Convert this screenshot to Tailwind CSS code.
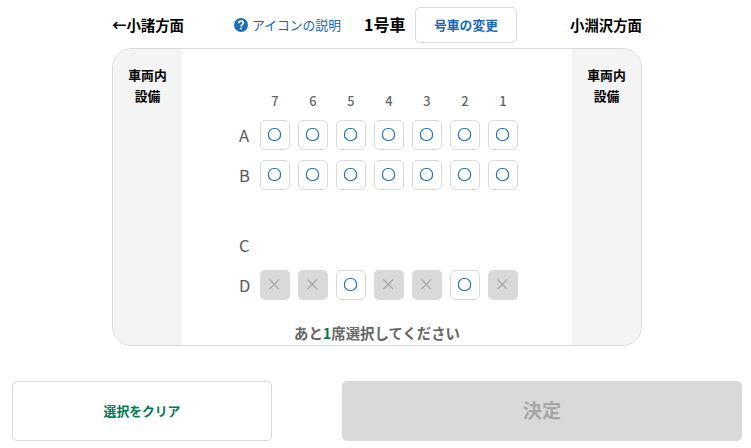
<!DOCTYPE html>
<html lang="ja">
<head>
    <meta charset="UTF-8">
    <meta name="viewport" content="width=device-width, initial-scale=1.0">
    <title>座席選択</title>
    <script src="https://cdn.jsdelivr.net/npm/@tailwindcss/browser@4"></script>
</head>
<body class="bg-white text-black font-['Noto_Sans_CJK_JP',sans-serif] overflow-hidden">
    <!-- アイコン定義 -->
    <svg class="hidden">
        <symbol id="vacant" viewBox="0 0 15 15">
            <rect x="1.5" y="1.5" width="12" height="12" rx="5.3" fill="none" stroke="#1d72b8" stroke-width="1.2" />
        </symbol>
        <symbol id="taken" viewBox="0 0 15 15">
            <path d="M2.5 2.5L12 12M12 2.5L2.5 12" fill="none" stroke="#a6a6a6" stroke-width="1.1" />
        </symbol>
    </svg>

    <!-- 号車ヘッダー -->
    <header class="flex items-center w-[530px] h-12 ml-28 pt-0.5 font-bold">
        <div class="w-[122px] text-[14.4px]">←小諸方面</div>
        <a href="#" class="flex items-center w-[130px] text-[12.8px] font-normal text-[#2065b0]">
            <svg class="w-3.5 h-3.5 mr-1" viewBox="0 0 14 14">
                <circle cx="7" cy="7" r="7" fill="#1d6fb5" />
                <path d="M4.7 5.3C4.7 3.8 5.7 3.1 7.1 3.1C8.5 3.1 9.4 3.8 9.4 5C9.4 6.5 7.1 6.5 7.1 8.4" fill="none" stroke="#fff" stroke-width="1.6" />
                <circle cx="7.1" cy="10.5" r="1" fill="#fff" />
            </svg>
            アイコンの説明
        </a>
        <div class="w-[51px] -mt-0.5 text-base">1号車</div>
        <button type="button" class="w-[102px] h-9 border border-[#d9d9d9] rounded-[5px] text-[12.8px] text-[#1d69b4]">号車の変更</button>
        <div class="ml-auto text-[14.4px]">小淵沢方面</div>
    </header>

    <!-- 車両 -->
    <main class="flex w-[530px] h-[298px] ml-28 border border-[#d9d9d9] rounded-[20px] overflow-hidden">
        <div class="w-[69px] pt-[15px] bg-[#f4f4f4] text-center text-[12.8px] leading-[21px] font-bold">車両内<br>設備</div>
        <div class="flex-1 flex flex-col text-[#595757]">
            <div class="flex gap-2 h-[71px] pt-[42px] pl-[78px] text-[12.8px] leading-5 font-medium text-center text-[#666]">
                <span class="w-[30px]">7</span>
                <span class="w-[30px]">6</span>
                <span class="w-[30px]">5</span>
                <span class="w-[30px]">4</span>
                <span class="w-[30px]">3</span>
                <span class="w-[30px]">2</span>
                <span class="w-[30px]">1</span>
            </div>
            <div id="rowA" class="flex gap-2 h-10 pl-[57px]"></div>
            <div id="rowB" class="flex gap-2 h-[70px] pl-[57px]"></div>
            <div id="rowC" class="flex gap-2 h-10 pl-[57px]"></div>
            <div id="rowD" class="flex gap-2 h-[52px] pl-[57px]"></div>
            <p class="text-center text-[14.4px] leading-[22px] font-bold text-[#666]">あと<span class="text-[#007a53]">1</span>席選択してください</p>
        </div>
        <div class="w-[69px] pt-[15px] bg-[#f4f4f4] text-center text-[12.8px] leading-[21px] font-bold">車両内<br>設備</div>
    </main>

    <!-- 操作ボタン -->
    <footer class="flex gap-[70px] pt-[35px] pl-3 font-bold">
        <button type="button" class="w-[260px] h-[60px] border border-[#d9d9d9] rounded-[5px] text-[12.8px] text-[#007a53]">選択をクリア</button>
        <button type="button" disabled class="w-[400px] h-[60px] pb-0.5 bg-[#d9d9d9] rounded-[5px] text-[19.2px] text-[#a6a6a6]">決定</button>
    </footer>

    <script>
        // o: 空席, x: 販売済み（7番から1番の順）
        const seats = { A: 'ooooooo', B: 'ooooooo', C: '', D: 'xxoxxox' };

        const vacant = '<button type="button" class="flex justify-center w-[30px] h-[30px] pt-1.5 pr-px border border-[#d9d9d9] rounded-[5px]"><svg class="w-[15px] h-[15px]"><use href="#vacant" /></svg></button>';
        const taken = '<button type="button" disabled class="flex justify-center w-[30px] h-[30px] pt-[7px] pr-px bg-[#d9d9d9] rounded-[5px]"><svg class="w-[15px] h-[15px]"><use href="#taken" /></svg></button>';

        for (const row in seats) {
            let html = '<span class="w-[13px] text-[16.5px] leading-[30px]">' + row + '</span>';
            for (const seat of seats[row]) {
                html += seat === 'o' ? vacant : taken;
            }
            document.getElementById('row' + row).innerHTML = html;
        }
    </script>
</body>
</html>
